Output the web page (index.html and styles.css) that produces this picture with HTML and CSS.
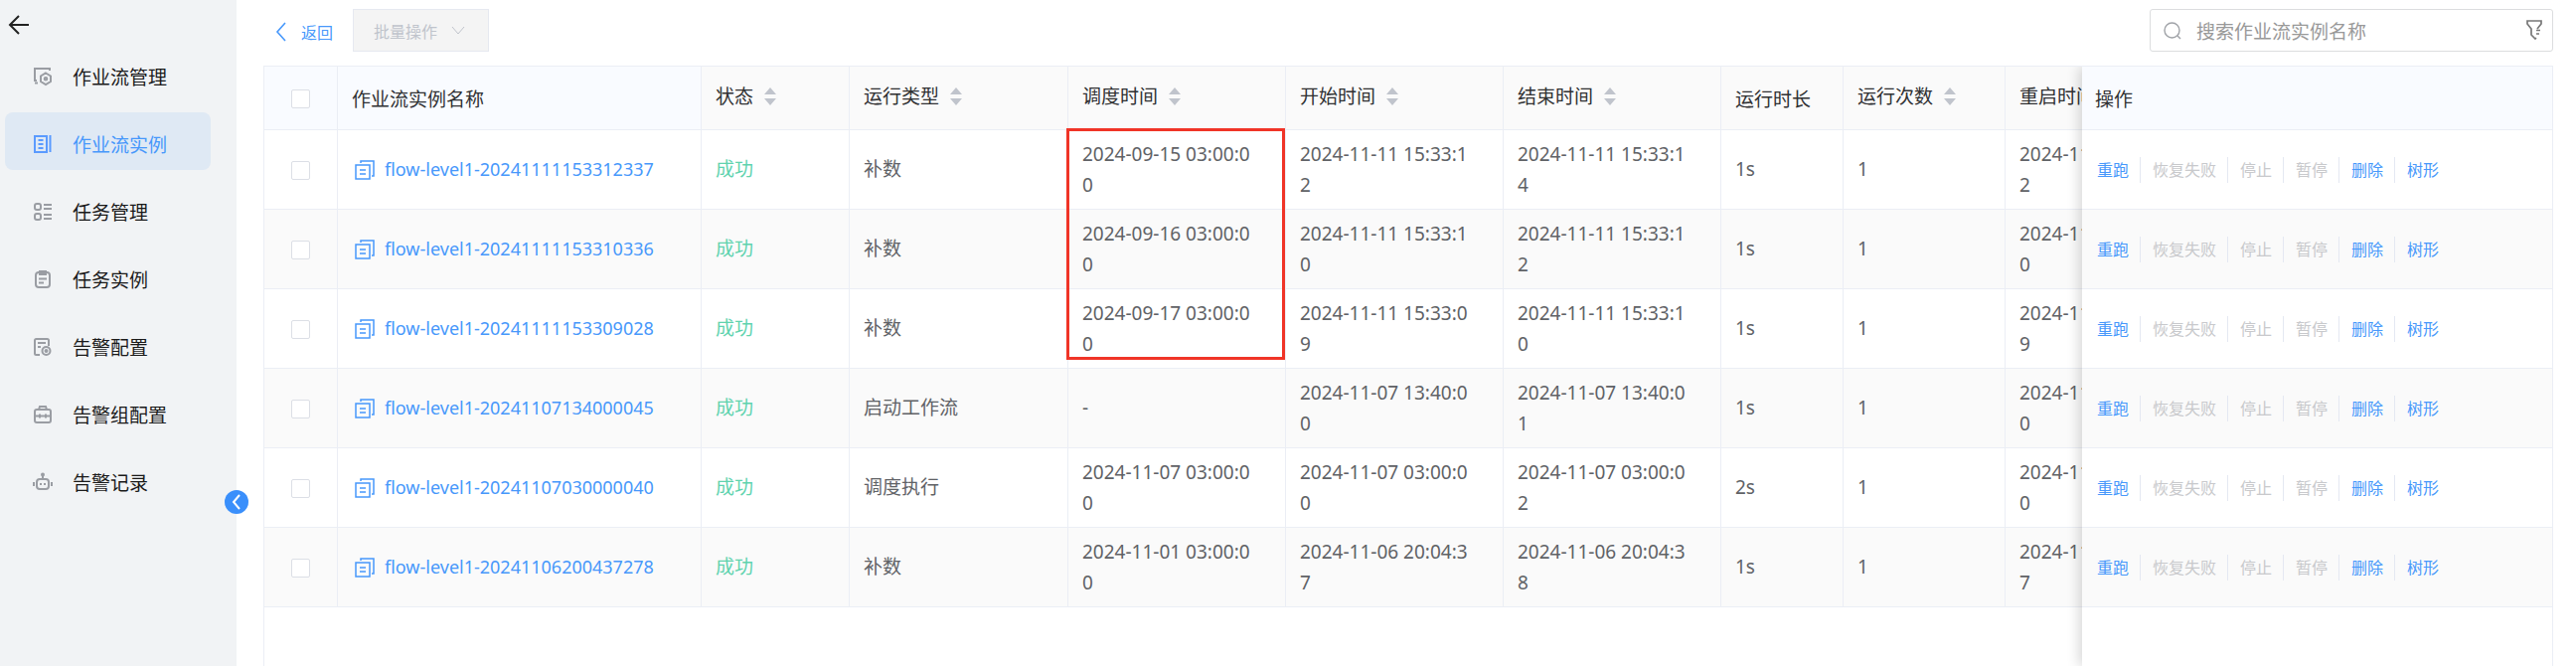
FILE: index.html
```
<!DOCTYPE html>
<html lang="zh-CN">
<head>
    <meta charset="UTF-8">
    <meta name="viewport" content="width=device-width, initial-scale=1.0">
    <title>作业流实例</title>
    <link rel="stylesheet" href="styles.css">
</head>
<body>
    <aside class="sidebar">
        <button class="sidebar-back" type="button" aria-label="返回上级">
            <svg width="22" height="20" viewBox="0 0 22 20"><path d="M11 1L2 10l9 9M2 10h19"/></svg>
        </button>
        <nav class="menu">
            <a class="menu-item" href="#">
                <svg class="menu-icon" viewBox="0 0 18 18"><path d="M16 3V1H1v12h2M1 15.500h3M12 5.500l5 3v5.500l-5 3-5-3V8.500z"/><circle cx="12" cy="11.200" r="1.300"/></svg>
                <span>作业流管理</span>
            </a>
            <a class="menu-item active" href="#">
                <svg class="menu-icon" viewBox="0 0 18 18"><path d="M1 1h12v16H1zM16.500 0v17M4.500 5h5M4.500 9h5M4.500 13h5"/></svg>
                <span>作业流实例</span>
            </a>
            <a class="menu-item" href="#">
                <svg class="menu-icon" viewBox="0 0 18 18"><rect x="1" y="1" width="6" height="6" rx="2"/><rect x="1" y="11" width="6" height="6" rx="2"/><path d="M10 2h8M10 6h8M10 12h8M10 16h8"/></svg>
                <span>任务管理</span>
            </a>
            <a class="menu-item" href="#">
                <svg class="menu-icon" viewBox="0 0 18 18"><rect x="2" y="2" width="14" height="15" rx="3"/><path d="M6 1h6v3H6zM6 2.500h6M5 8.500h8M5 12.500h5"/></svg>
                <span>任务实例</span>
            </a>
            <a class="menu-item" href="#">
                <svg class="menu-icon" viewBox="0 0 18 18"><path d="M15 8V2.500A1.500 1.500 0 0 0 13.500 1h-11A1.500 1.500 0 0 0 1 2.500v13A1.500 1.500 0 0 0 2.500 17H6M4 5h8M4 9h3"/><circle cx="12.500" cy="13" r="4"/><circle cx="12.500" cy="13" r="1"/></svg>
                <span>告警配置</span>
            </a>
            <a class="menu-item" href="#">
                <svg class="menu-icon" viewBox="0 0 18 18"><rect x="1" y="4" width="16" height="13" rx="2"/><path d="M5 4l1-3h6l1 3M1 10.500h16M6 8.500v4M12 8.500v4"/></svg>
                <span>告警组配置</span>
            </a>
            <a class="menu-item" href="#">
                <svg class="menu-icon" viewBox="0 0 18 18"><rect x="3" y="6" width="12" height="10" rx="3"/><path d="M9 6V2M0 9v4M18 9v4M7 10v2M11 10v2"/><circle cx="9" cy="1.500" r="1"/></svg>
                <span>告警记录</span>
            </a>
        </nav>
        <button class="collapse" type="button" aria-label="收起菜单">
            <svg width="10" height="16" viewBox="0 0 10 16"><path d="M8 1L2 8l6 7"/></svg>
        </button>
    </aside>

    <main class="content">
        <div class="toolbar">
            <a class="back-link" href="#">
                <svg width="12" height="20" viewBox="0 0 12 20" stroke-width="1.6"><path d="M10 1L2 10l8 9"/></svg>
                返回
            </a>
            <button class="batch-btn" type="button" disabled>
                批量操作
                <svg width="14" height="10" viewBox="0 0 14 10"><path d="M1 1l6 7 6-7"/></svg>
            </button>
            <div class="search">
                <svg class="search-icon" width="18" height="18" viewBox="0 0 18 18" stroke-width="1.4"><circle cx="8.500" cy="8.500" r="7.500"/><path d="M14 14l3 3"/></svg>
                <input type="text" placeholder="搜索作业流实例名称" aria-label="搜索作业流实例名称">
                <button class="filter-btn" type="button" aria-label="筛选">
                    <svg width="18" height="20" viewBox="0 0 18 20" stroke-width="1.7"><path d="M12 9l4-5V1H2v3l4 5v6l4 4 1-1M11 10.500h4M11 14h3"/></svg>
                </button>
            </div>
        </div>

        <div class="table-box">
            <div class="table-scroll">
                <table class="main-table">
                    <colgroup>
                        <col class="w-check">
                        <col class="w-name">
                        <col class="w-status">
                        <col class="w-type">
                        <col class="w-time">
                        <col class="w-time">
                        <col class="w-time">
                        <col class="w-duration">
                        <col class="w-count">
                        <col class="w-time">
                    </colgroup>
                    <thead>
                        <tr>
                            <th class="fixed check"><input type="checkbox" aria-label="全选"></th>
                            <th class="fixed">作业流实例名称</th>
                            <th class="sortable">状态</th>
                            <th class="sortable">运行类型</th>
                            <th class="sortable">调度时间</th>
                            <th class="sortable">开始时间</th>
                            <th class="sortable">结束时间</th>
                            <th>运行时长</th>
                            <th class="sortable">运行次数</th>
                            <th class="sortable">重启时间</th>
                        </tr>
                    </thead>
                    <tbody id="rows"></tbody>
                </table>
            </div>
            <div class="table-fixed">
                <table>
                    <thead>
                        <tr><th class="fixed">操作</th></tr>
                    </thead>
                    <tbody id="actions"></tbody>
                </table>
            </div>
        </div>
    </main>

    <script>
        const flows = [
            { id: "20241111153312337", type: "补数", plan: "2024-09-15 03:00:00", start: "2024-11-11 15:33:12", end: "2024-11-11 15:33:14", cost: "1s", restart: "2024-11-11 15:33:12" },
            { id: "20241111153310336", type: "补数", plan: "2024-09-16 03:00:00", start: "2024-11-11 15:33:10", end: "2024-11-11 15:33:12", cost: "1s", restart: "2024-11-11 15:33:10" },
            { id: "20241111153309028", type: "补数", plan: "2024-09-17 03:00:00", start: "2024-11-11 15:33:09", end: "2024-11-11 15:33:10", cost: "1s", restart: "2024-11-11 15:33:09" },
            { id: "20241107134000045", type: "启动工作流", plan: "-", start: "2024-11-07 13:40:00", end: "2024-11-07 13:40:01", cost: "1s", restart: "2024-11-07 13:40:00" },
            { id: "20241107030000040", type: "调度执行", plan: "2024-11-07 03:00:00", start: "2024-11-07 03:00:00", end: "2024-11-07 03:00:02", cost: "2s", restart: "2024-11-07 03:00:00" },
            { id: "20241106200437278", type: "补数", plan: "2024-11-01 03:00:00", start: "2024-11-06 20:04:37", end: "2024-11-06 20:04:38", cost: "1s", restart: "2024-11-06 20:04:37" }
        ];

        const copyIcon = `<svg class="copy-icon" width="20" height="20" viewBox="0 0 20 20" stroke-width="1.5"><path d="M1 5h14v14H1zM6 3V1h13v15h-2M5 10h6M5 14h6"/></svg>`;
        const sortIcon = `<svg class="sort-icon" width="14" height="18" viewBox="0 0 14 18"><path d="M7 0l6 7H1zM7 18l6-7H1z"/></svg>`;

        document.querySelectorAll(".sortable").forEach(th => th.insertAdjacentHTML("beforeend", sortIcon));

        document.getElementById("rows").innerHTML = flows.map((flow, index) => `
            <tr>
                <td class="check"><input type="checkbox" aria-label="选择 flow-level1-${flow.id}"></td>
                <td><a class="flow-link" href="#">${copyIcon}flow-level1-${flow.id}</a></td>
                <td class="success">成功</td>
                <td>${flow.type}</td>
                <td class="plan">${flow.plan}${index === 0 ? '<div class="highlight"></div>' : ""}</td>
                <td>${flow.start}</td>
                <td>${flow.end}</td>
                <td>${flow.cost}</td>
                <td>1</td>
                <td>${flow.restart}</td>
            </tr>`).join("");

        document.getElementById("actions").innerHTML = flows.map(() => `
            <tr>
                <td>
                    <div class="actions">
                        <button type="button">重跑</button>
                        <button type="button" disabled>恢复失败</button>
                        <button type="button" disabled>停止</button>
                        <button type="button" disabled>暂停</button>
                        <button type="button">删除</button>
                        <button type="button">树形</button>
                    </div>
                </td>
            </tr>`).join("");
    </script>
</body>
</html>
```
FILE: styles.css
```
* {
    box-sizing: border-box;
}
body {
    margin: 0;
    display: flex;
    height: 100vh;
    overflow: hidden;
    background: #fff;
    color: #606266;
    font-family: "Noto Sans", "Noto Sans CJK SC", sans-serif;
    font-size: 19px;
}
button, input {
    font-family: inherit;
}
button {
    padding: 0;
    border: none;
    background: none;
    cursor: pointer;
}
button:disabled {
    cursor: not-allowed;
}
a {
    color: #4798fb;
    text-decoration: none;
}
svg {
    fill: none;
    stroke: currentColor;
    flex-shrink: 0;
}

/* sidebar */
.sidebar {
    position: relative;
    flex: 0 0 238px;
    background: #f1f3f5;
}
.sidebar-back {
    display: flex;
    margin: 15px 0 10px 8px;
    color: #222;
}
.sidebar-back svg {
    stroke-width: 2;
}
.menu {
    display: flex;
    flex-direction: column;
    gap: 10px;
    padding: 0 26px 0 5px;
}
.menu-item {
    display: flex;
    align-items: center;
    gap: 21px;
    height: 58px;
    padding: 5px 0 0 29px;
    border-radius: 8px;
    color: #1a1a1a;
}
.menu-item.active {
    background: #dfe9f4;
    color: #4798fb;
}
.menu-icon {
    width: 18px;
    height: 18px;
    overflow: visible;
    color: #9a9da3;
    stroke-width: 2;
}
.active .menu-icon {
    color: #5b9bff;
}
.collapse {
    position: absolute;
    top: 493px;
    right: -12px;
    display: flex;
    align-items: center;
    justify-content: center;
    width: 24px;
    height: 24px;
    border-radius: 50%;
    background: #3a8ffb;
    color: #fff;
}
.collapse svg {
    stroke-width: 2;
}

/* toolbar */
.content {
    display: flex;
    flex-direction: column;
    flex: 1;
    min-width: 0;
    padding: 9px 23px 0 27px;
}
.toolbar {
    display: flex;
    align-items: center;
    height: 43px;
    margin-bottom: 14px;
}
.back-link {
    display: flex;
    align-items: center;
    gap: 14px;
    padding: 2px 20px 0 12px;
    font-size: 16px;
}
.batch-btn {
    display: flex;
    align-items: center;
    gap: 14px;
    height: 43px;
    padding: 0 23px 0 20px;
    border: 1px solid #e6e9f0;
    background: #f4f4f4;
    color: #c0c4cc;
    font-size: 16px;
}
.search {
    display: flex;
    align-items: center;
    width: 406px;
    height: 43px;
    margin-left: auto;
    padding: 0 9px 0 13px;
    border: 1px solid #dcdddf;
    border-radius: 3px;
}
.search-icon {
    color: #a0a3a8;
}
.search input {
    flex: 1;
    min-width: 0;
    padding: 2px 15px 0;
    border: none;
    outline: none;
    font-size: 19px;
}
.search input::placeholder {
    color: #999;
}
.filter-btn {
    display: flex;
    padding-bottom: 2px;
    color: #777;
}

/* table */
.table-box {
    display: flex;
    flex: 1;
    min-height: 0;
    border: 1px solid #ebeef5;
    border-bottom: none;
}
.table-scroll {
    flex: 1;
    min-width: 0;
    overflow: hidden;
}
.table-fixed {
    position: relative;
    flex: 0 0 473px;
    background: #fff;
    box-shadow: -3px 0 12px rgba(0, 0, 0, 0.16);
    clip-path: inset(0 0 0 -20px);
}
table {
    width: 100%;
    table-layout: fixed;
    border-collapse: separate;
    border-spacing: 0;
}
.main-table {
    width: 1971px;
}
.w-check { width: 74px; }
.w-name { width: 366px; }
.w-status { width: 149px; }
.w-type { width: 220px; }
.w-time { width: 219px; }
.w-duration { width: 123px; }
.w-count { width: 163px; }
th, td {
    padding: 0 30px 0 14px;
    border-right: 1px solid #ebeef5;
    border-bottom: 1px solid #ebeef5;
    text-align: left;
    line-height: 31px;
    word-break: break-all;
}
th {
    height: 64px;
    padding-top: 3px;
    background: #fafafa;
    color: #303133;
    font-weight: normal;
    white-space: nowrap;
}
th.fixed {
    background: #f9fbff;
}
th.sortable {
    padding-top: 0;
    padding-right: 0;
    padding-bottom: 3px;
}
td {
    height: 80px;
}
tbody tr:nth-child(even) td {
    background: #fafafa;
}
.table-fixed th, .table-fixed td {
    padding-right: 0;
    border-right: none;
}
.table-fixed th {
    padding-left: 13px;
}
th.check, td.check {
    padding: 2px 0 0;
}
.check input {
    appearance: none;
    display: block;
    width: 19px;
    height: 19px;
    margin: 0 auto;
    border: 1px solid #dcdfe6;
    border-radius: 2px;
    background: #fff;
}
.sort-icon {
    margin-left: 10px;
    vertical-align: -2px;
    fill: #c0c4cc;
    stroke: none;
}
.flow-link {
    display: flex;
    align-items: center;
    gap: 10px;
    padding-left: 3px;
    font-size: 18px;
    white-space: nowrap;
}
.success {
    color: #5fd3ae;
}
.plan {
    position: relative;
}
.highlight {
    position: absolute;
    top: -2px;
    left: -2px;
    z-index: 1;
    width: 220px;
    height: 233px;
    border: 3px solid #f03427;
    pointer-events: none;
}
.actions {
    display: flex;
    padding-left: 1px;
}
.actions button {
    height: 26px;
    padding: 0 11px 0 12px;
    border-right: 1px solid #e4e8f2;
    color: #4798fb;
    font-size: 16px;
    line-height: 26px;
}
.actions button:first-child {
    padding-left: 0;
}
.actions button:last-child {
    border-right: none;
}
.actions button:disabled {
    color: #c8c9cc;
}
```
